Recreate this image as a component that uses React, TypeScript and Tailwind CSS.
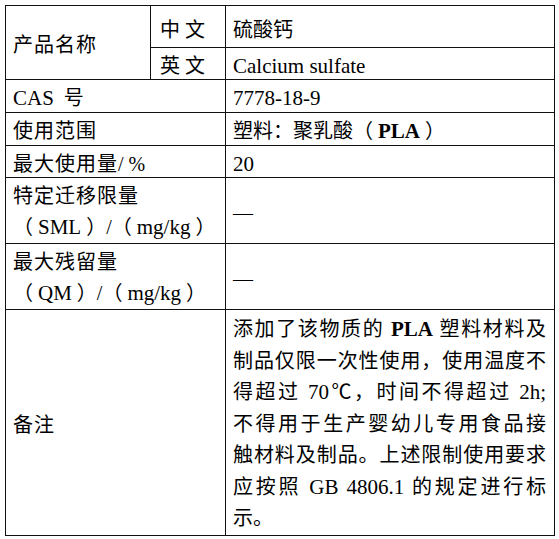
const font = "[font-family:'Liberation_Serif','Noto_Sans_CJK_SC',serif]";

function L({ children, bold, gap }: { children: React.ReactNode; bold?: boolean; gap?: boolean }) {
  // latin runs print a bit larger than the CJK ones
  const cls = ["text-[21px]", bold ? "font-bold" : "", gap ? "mx-[5px]" : ""].join(" ");
  return <span className={cls}>{children}</span>;
}

const remark: React.ReactNode[] = [
  <>添加了该物质的 <L bold>PLA</L> 塑料材料及</>,
  <>制品仅限一次性使用，使用温度不</>,
  <>得超过 <L>70</L>℃，时间不得超过 <L>2h;</L></>,
  <>不得用于生产婴幼儿专用食品接</>,
  <>触材料及制品。上述限制使用要求</>,
  <>应按照 <L>GB 4806.1</L> 的规定进行标</>,
];

export default function App() {
  const cell = "border border-[#111] align-middle p-0";
  const one = "leading-[26px] pt-[4px]";
  return (
    <div className={`pt-[5px] pl-[5px] bg-white text-black text-[20px] ${font}`}>
      <table className="border-collapse table-fixed w-[549px]">
        <colgroup>
          <col className="w-[145px]" />
          <col className="w-[75px]" />
          <col className="w-[329px]" />
        </colgroup>
        <tbody>
          <tr className="h-[42px]">
            <td rowSpan={2} className={`${cell} ${one} pl-[7px] tracking-[1px]`}>产品名称</td>
            <td className={`${cell} ${one} pl-[9px] !pt-[6px] tracking-[5px]`}>中文</td>
            <td className={`${cell} ${one} pl-[7px] !pt-[6px]`}>硫酸钙</td>
          </tr>
          <tr className="h-[32px]">
            <td className={`${cell} ${one} pl-[9px] tracking-[5px]`}>英文</td>
            <td className={`${cell} ${one} pl-[7px]`}><L>Calcium sulfate</L></td>
          </tr>
          <tr className="h-[33px]">
            <td colSpan={2} className={`${cell} ${one} pl-[7px]`}><L>CAS</L>&nbsp; 号</td>
            <td className={`${cell} ${one} pl-[7px]`}><L>7778-18-9</L></td>
          </tr>
          <tr className="h-[33px]">
            <td colSpan={2} className={`${cell} ${one} pl-[7px] tracking-[1px]`}>使用范围</td>
            <td className={`${cell} ${one} pl-[7px]`}>塑料：聚乳酸（<L bold gap>PLA</L>）</td>
          </tr>
          <tr className="h-[32px]">
            <td colSpan={2} className={`${cell} ${one} pl-[7px]`}>
              <span className="tracking-[1px]">最大使用量</span>/ %
            </td>
            <td className={`${cell} ${one} pl-[7px]`}><L>20</L></td>
          </tr>
          <tr className="h-[65px]">
            <td colSpan={2} className={`${cell} pl-[7px] pt-[3px] leading-[31px]`}>
              <div className="tracking-[1px]">特定迁移限量</div>
              <div>（<L gap>SML</L>）/（<L gap>mg/kg</L>）</div>
            </td>
            <td className={`${cell} ${one} pl-[7px]`}>—</td>
          </tr>
          <tr className="h-[65px]">
            <td colSpan={2} className={`${cell} pl-[7px] pt-[3px] leading-[31px]`}>
              <div className="tracking-[1px]">最大残留量</div>
              <div>（<L gap>QM</L>）/（<L gap>mg/kg</L>）</div>
            </td>
            <td className={`${cell} ${one} pl-[7px]`}>—</td>
          </tr>
          <tr className="h-[226px]">
            <td colSpan={2} className={`${cell} ${one} pl-[7px] tracking-[1px]`}>备注</td>
            <td className={`${cell} !align-top pl-[7px] pr-[8px] pt-[4px] leading-[31.5px]`}>
              {remark.map((line, i) => (
                <div key={i} className="text-justify [text-align-last:justify] whitespace-nowrap">
                  {line}
                </div>
              ))}
              <div>示。</div>
            </td>
          </tr>
        </tbody>
      </table>
    </div>
  );
}
